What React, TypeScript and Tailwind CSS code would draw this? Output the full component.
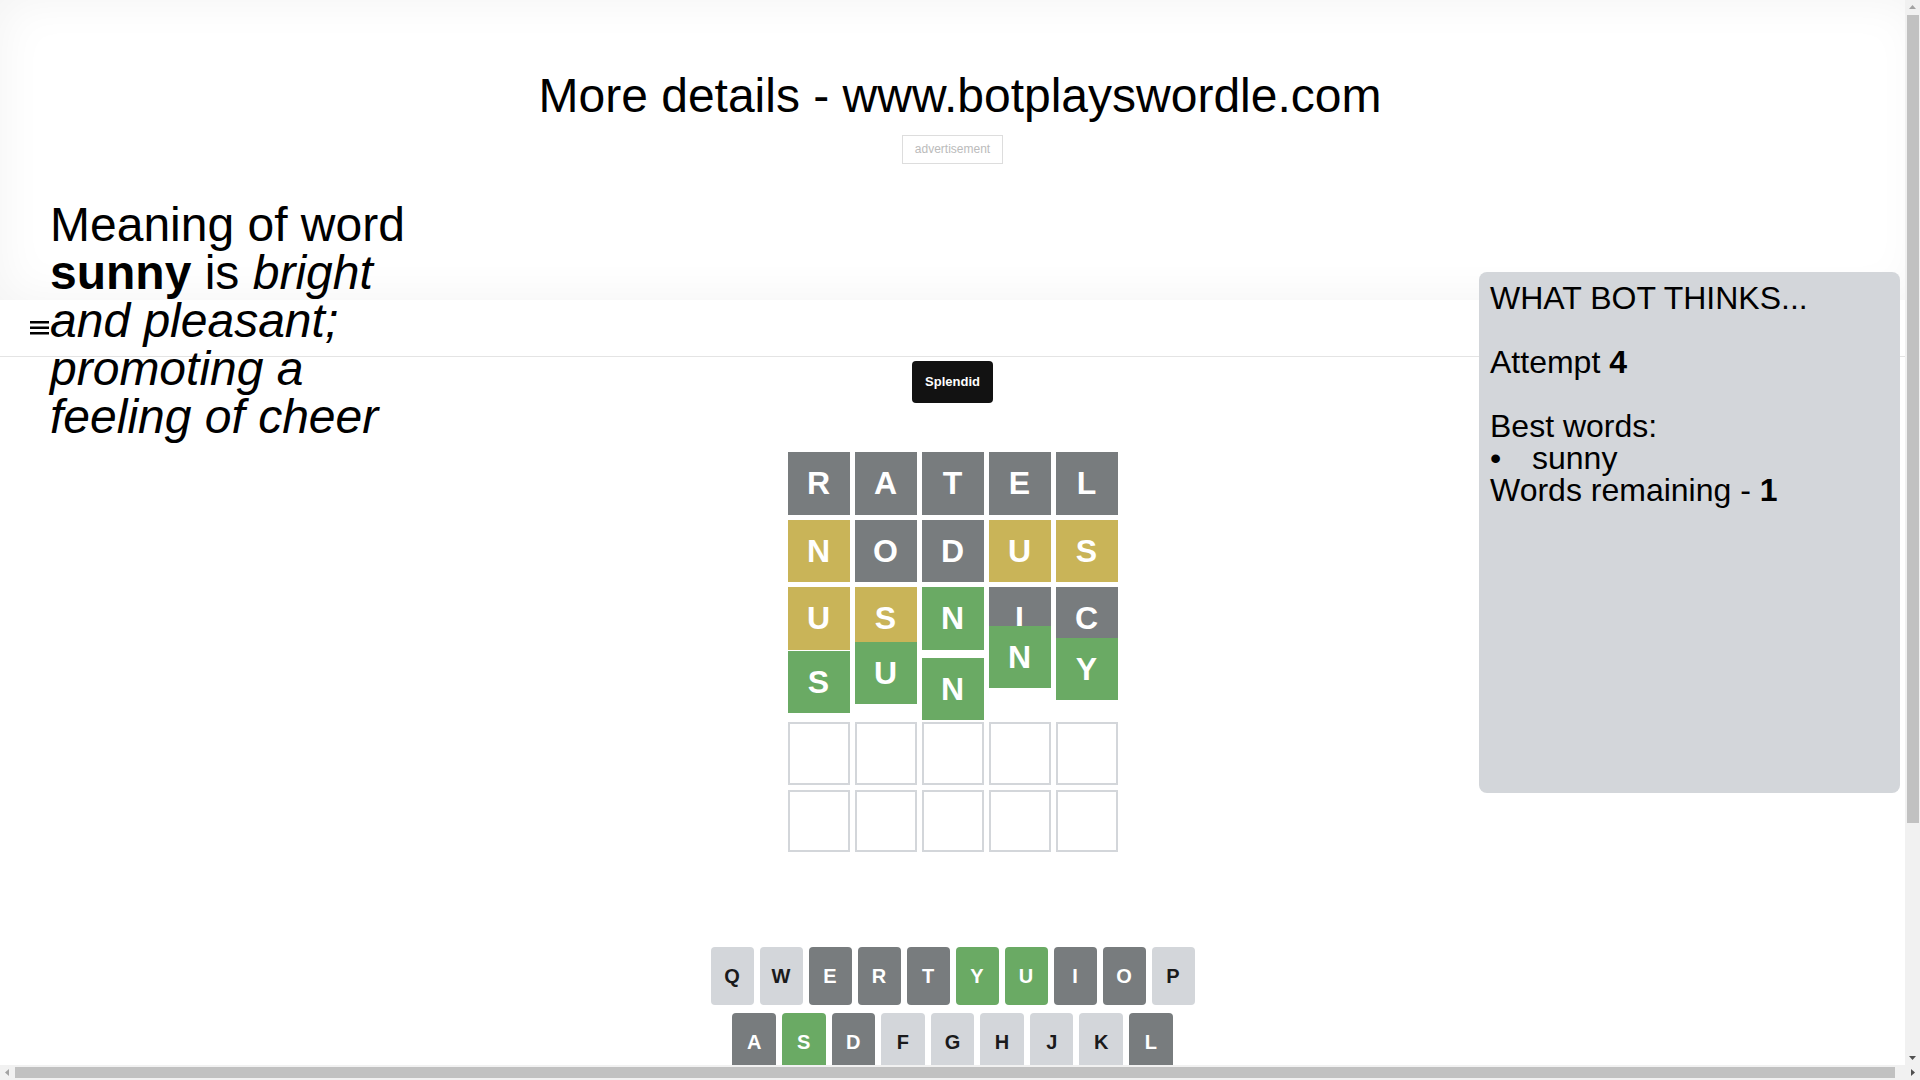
import React from 'react';

type Tile = { l: string; c: 'gray' | 'yellow' | 'green' | 'empty'; shift?: string };

const tileColor: Record<string, string> = {
  gray: 'bg-[#787c7e] text-white',
  yellow: 'bg-[#c9b458] text-white',
  green: 'bg-[#6aaa64] text-white',
  empty: 'bg-white border-2 border-[#d3d6da]',
};

const rows: Tile[][] = [
  [
    { l: 'R', c: 'gray' },
    { l: 'A', c: 'gray' },
    { l: 'T', c: 'gray' },
    { l: 'E', c: 'gray' },
    { l: 'L', c: 'gray' },
  ],
  [
    { l: 'N', c: 'yellow' },
    { l: 'O', c: 'gray' },
    { l: 'D', c: 'gray' },
    { l: 'U', c: 'yellow' },
    { l: 'S', c: 'yellow' },
  ],
  [
    { l: 'U', c: 'yellow' },
    { l: 'S', c: 'yellow' },
    { l: 'N', c: 'green' },
    { l: 'I', c: 'gray' },
    { l: 'C', c: 'gray' },
  ],
  // last guess is mid-bounce, so each tile sits at a different height
  [
    { l: 'S', c: 'green', shift: '-translate-y-[4px]' },
    { l: 'U', c: 'green', shift: '-translate-y-[13px]' },
    { l: 'N', c: 'green', shift: 'translate-y-[3px]' },
    { l: 'N', c: 'green', shift: '-translate-y-[29px]' },
    { l: 'Y', c: 'green', shift: '-translate-y-[17px]' },
  ],
  Array.from({ length: 5 }, () => ({ l: '', c: 'empty' as const })),
  Array.from({ length: 5 }, () => ({ l: '', c: 'empty' as const })),
];

type Key = { k: string; c: 'light' | 'gray' | 'green'; wide?: boolean };

const keyColor: Record<string, string> = {
  light: 'bg-[#d3d6da] text-[#1a1a1b]',
  gray: 'bg-[#787c7e] text-white',
  green: 'bg-[#6aaa64] text-white',
};

const keyRows: Key[][] = [
  [
    { k: 'Q', c: 'light' },
    { k: 'W', c: 'light' },
    { k: 'E', c: 'gray' },
    { k: 'R', c: 'gray' },
    { k: 'T', c: 'gray' },
    { k: 'Y', c: 'green' },
    { k: 'U', c: 'green' },
    { k: 'I', c: 'gray' },
    { k: 'O', c: 'gray' },
    { k: 'P', c: 'light' },
  ],
  [
    { k: 'A', c: 'gray' },
    { k: 'S', c: 'green' },
    { k: 'D', c: 'gray' },
    { k: 'F', c: 'light' },
    { k: 'G', c: 'light' },
    { k: 'H', c: 'light' },
    { k: 'J', c: 'light' },
    { k: 'K', c: 'light' },
    { k: 'L', c: 'gray' },
  ],
  [
    { k: 'ENTER', c: 'light', wide: true },
    { k: 'Z', c: 'light' },
    { k: 'X', c: 'light' },
    { k: 'C', c: 'gray' },
    { k: 'V', c: 'light' },
    { k: 'B', c: 'light' },
    { k: 'N', c: 'green' },
    { k: 'M', c: 'light' },
    { k: 'DEL', c: 'light', wide: true },
  ],
];

const Board = () => (
  <div className="grid gap-[5px] w-[330px]">
    {rows.map((row, i) => (
      <div key={i} className="grid grid-cols-5 gap-[5px]">
        {row.map((t, j) => (
          <div
            key={j}
            className={`h-[62.5px] flex items-center justify-center text-[32px] font-bold uppercase ${tileColor[t.c]} ${t.shift ?? ''}`}
          >
            {t.l}
          </div>
        ))}
      </div>
    ))}
  </div>
);

const Keyboard = () => (
  <div className="flex flex-col items-center gap-2">
    {keyRows.map((row, i) => (
      <div key={i} className="flex gap-[6px]">
        {row.map((key) => (
          <div
            key={key.k}
            className={`h-[58px] rounded flex items-center justify-center font-bold ${
              key.wide ? 'w-[65px] text-xs' : i === 1 ? 'w-[43.6px] text-xl' : 'w-[43px] text-xl'
            } ${keyColor[key.c]}`}
          >
            {key.k}
          </div>
        ))}
      </div>
    ))}
  </div>
);

const Arrow = ({ dir, dark }: { dir: 'up' | 'down' | 'left' | 'right'; dark?: boolean }) => {
  const pts = {
    up: '4,9 7.5,5 11,9',
    down: '4,6 7.5,10 11,6',
    left: '9,4 5,7.5 9,11',
    right: '6,4 10,7.5 6,11',
  }[dir];
  return (
    <div className="w-[15px] h-[15px] shrink-0 flex items-center justify-center">
      <svg width="15" height="15" viewBox="0 0 15 15">
        <polygon points={pts} fill={dark ? '#505050' : '#a3a3a3'} />
      </svg>
    </div>
  );
};

const Page = () => (
  <div className="relative w-[1905px] h-full overflow-hidden bg-white text-black">
    <header className="w-[1920px] h-[300px] pt-[72px] bg-white shadow-[inset_0_0_48px_rgba(0,0,0,0.05)]">
      <h1 className="text-5xl leading-none text-center">More details - www.botplayswordle.com</h1>
      <div className="w-[1905px] flex justify-center mt-[15px]">
        <div className="border border-[#dddddd] px-3 py-[6px] text-xs leading-[15px] text-[#bbbbbb]">
          advertisement
        </div>
      </div>
    </header>

    <nav className="h-[57px] border-b border-[#e4e4e4] flex items-center pl-[30px]">
      <svg width="19" height="14" viewBox="0 0 19 14" fill="#000">
        <rect x="0" y="0" width="19" height="2.5" />
        <rect x="0" y="5.5" width="19" height="2.5" />
        <rect x="0" y="11" width="19" height="2.5" />
      </svg>
    </nav>

    <main className="flex flex-col items-center">
      <div className="mt-[4px] rounded bg-[#121212] text-white font-bold text-[13px] leading-[16px] px-[13px] py-[13px]">
        Splendid
      </div>
      <div className="mt-[49px]">
        <Board />
      </div>
      <div className="mt-[95px]">
        <Keyboard />
      </div>
    </main>

    <div className="absolute left-[50px] top-[201px] w-[380px] text-5xl leading-none">
      Meaning of word <b>sunny</b> is <i>bright and pleasant; promoting a feeling of cheer</i>
    </div>

    <aside className="absolute right-[5px] top-[272px] w-[421px] h-[521px] rounded-lg bg-[#d3d6da] px-[11px] pt-[10px] text-[32px] leading-none">
      <div>WHAT BOT THINKS...</div>
      <br />
      <div>
        Attempt <b>4</b>
      </div>
      <br />
      <div>Best words:</div>
      <div className="flex">
        <span className="w-[42px]">•</span>
        <span>sunny</span>
      </div>
      <div>
        Words remaining - <b>1</b>
      </div>
    </aside>
  </div>
);

export default function App() {
  return (
    <div className="w-[1920px] h-[1080px] flex flex-col overflow-hidden bg-white font-['Liberation_Sans',Arial,sans-serif]">
      <div className="flex h-[1065px]">
        <Page />
        {/* browser scrollbar, vertical */}
        <div className="w-[15px] flex flex-col bg-[#f1f1f1]">
          <Arrow dir="up" />
          <div className="flex-1">
            <div className="h-[808px] ml-[2px] mr-px bg-[#c1c1c1]" />
          </div>
          <Arrow dir="down" dark />
        </div>
      </div>
      {/* browser scrollbar, horizontal */}
      <div className="h-[15px] flex bg-[#f1f1f1]">
        <Arrow dir="left" />
        <div className="flex-1 flex items-center">
          <div className="w-[1880px] h-[11px] bg-[#c1c1c1]" />
        </div>
        <Arrow dir="right" dark />
      </div>
    </div>
  );
}
